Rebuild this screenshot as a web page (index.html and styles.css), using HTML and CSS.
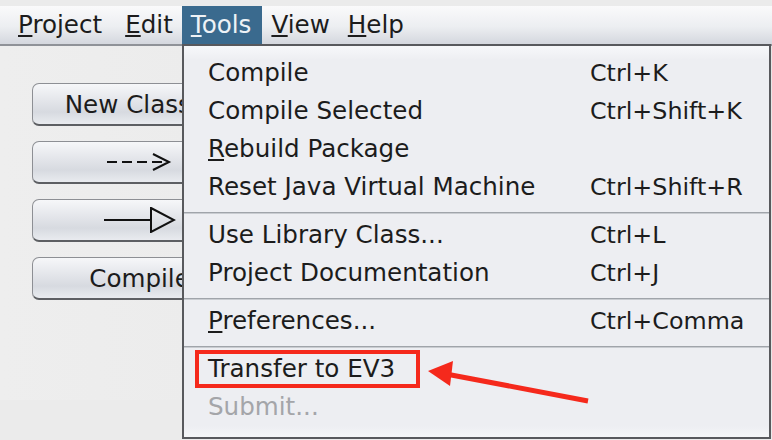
FILE: index.html
```html
<!DOCTYPE html>
<html>
<head>
<meta charset="utf-8">
<link rel="stylesheet" href="styles.css">
</head>
<body>
<div class="menubar">
  <span class="mitem first"><u>P</u>roject</span>
  <span class="mitem"><u>E</u>dit</span>
  <span class="mitem active"><u>T</u>ools</span>
  <span class="mitem"><u>V</u>iew</span>
  <span class="mitem"><u>H</u>elp</span>
</div>
<div class="workspace">
  <div class="toolcol">
    <div class="btn">New Class...</div>
    <div class="btn">
      <svg class="dep" width="66" height="22" viewBox="0 0 66 22"><path d="M0 11 H60" stroke="#111" stroke-width="2" stroke-dasharray="10 5" fill="none"/><path d="M46 3 L62 11 L46 19" stroke="#111" stroke-width="2" fill="none"/></svg>
    </div>
    <div class="btn">
      <svg class="inh" width="72" height="26" viewBox="0 0 72 26"><path d="M0 13 H47" stroke="#111" stroke-width="2" fill="none"/><path d="M47 1 L70 13 L47 25 Z" stroke="#111" stroke-width="2" fill="none"/></svg>
    </div>
    <div class="btn">Compile</div>
  </div>
</div>

<div class="popup">
  <div class="row"><span class="label">Compile</span><span class="key">Ctrl+K</span></div>
  <div class="row"><span class="label">Compile Selected</span><span class="key">Ctrl+Shift+K</span></div>
  <div class="row"><span class="label"><u>R</u>ebuild Package</span><span class="key"></span></div>
  <div class="row"><span class="label">Reset Java Virtual Machine</span><span class="key">Ctrl+Shift+R</span></div>
  <div class="sep"></div>
  <div class="row"><span class="label">Use Library Class...</span><span class="key">Ctrl+L</span></div>
  <div class="row"><span class="label">Project Documentation</span><span class="key">Ctrl+J</span></div>
  <div class="sep"></div>
  <div class="row"><span class="label"><u>P</u>references...</span><span class="key">Ctrl+Comma</span></div>
  <div class="sep"></div>
  <div class="row"><span class="label">Transfer to EV3</span><span class="key"></span></div>
  <div class="row disabled"><span class="label">Submit...</span><span class="key"></span></div>
</div>

<div class="callout"></div>
<svg class="pointer" width="772" height="440" viewBox="0 0 772 440">
  <path d="M588 401 L446 374" stroke="#f5291c" stroke-width="5" fill="none"/>
  <polygon points="428,371 453,361 450,386" fill="#f5291c"/>
</svg>
</body>
</html>
```

FILE: styles.css
```css
html, body {
  margin: 0;
  padding: 0;
}
body {
  width: 772px;
  height: 440px;
  overflow: hidden;
  background: #ebebeb;
  font-family: "DejaVu Sans", sans-serif;
  font-size: 24.6px;
  color: #1c1c1c;
  padding-top: 6px;
  box-sizing: border-box;
  position: relative;
}
u {
  text-decoration: underline;
  text-underline-offset: 2px;
  text-decoration-thickness: 2px;
}
.menubar {
  display: flex;
  height: 38px;
  line-height: 38px;
  background: linear-gradient(#fafafb, #eceef1 55%, #d4d7de);
  border-bottom: 2px solid #8f9298;
}
.mitem {
  padding: 0 9px;
  white-space: nowrap;
}
.mitem.first {
  margin-left: 9px;
  margin-right: 5px;
}
.mitem.active {
  background: #3a6a8e;
  color: #eef2f6;
  padding-right: 11px;
}
.workspace {
  height: 354px;
  background: linear-gradient(90deg, #eeeeee, #e6e6e6);
}
.toolcol {
  display: flex;
  flex-direction: column;
  gap: 15px;
  padding: 37px 0 0 32px;
}
.btn {
  width: 215px;
  height: 43px;
  box-sizing: border-box;
  border: 1px solid #8d8f94;
  border-bottom: 2px solid #5d5f63;
  border-radius: 7px;
  background: linear-gradient(#f6f7f9, #e2e4e9 45%, #d7dae0 70%, #e9ebef);
  display: flex;
  align-items: center;
  justify-content: center;
  color: #1c1c1c;
  white-space: nowrap;
}
.popup {
  position: absolute;
  left: 182px;
  top: 44px;
  width: 589px;
  height: 395px;
  box-sizing: border-box;
  border: 2px solid #58595d;
  background: linear-gradient(#f7f8fa, #edeef2 14px, #edeef2 380px, #f5f6f8);
  padding: 8px 0 11px 0;
}
.row {
  display: flex;
  height: 38px;
  line-height: 38px;
  padding-left: 24px;
  white-space: nowrap;
}
.label {
  flex: 0 0 382px;
}
.key {
  flex: 1;
  font-size: 23.8px;
}
.row.disabled {
  color: #a4a5a9;
}
.sep {
  margin: 6px 0 2px 0;
  height: 1px;
  background: #a0a4aa;
  border-bottom: 1px solid #c9ccd1;
}
.callout {
  position: absolute;
  left: 195px;
  top: 350px;
  width: 225px;
  height: 38px;
  box-sizing: border-box;
  border: 4px solid #f5291c;
}
.pointer {
  position: absolute;
  left: 0;
  top: 0;
}
```
